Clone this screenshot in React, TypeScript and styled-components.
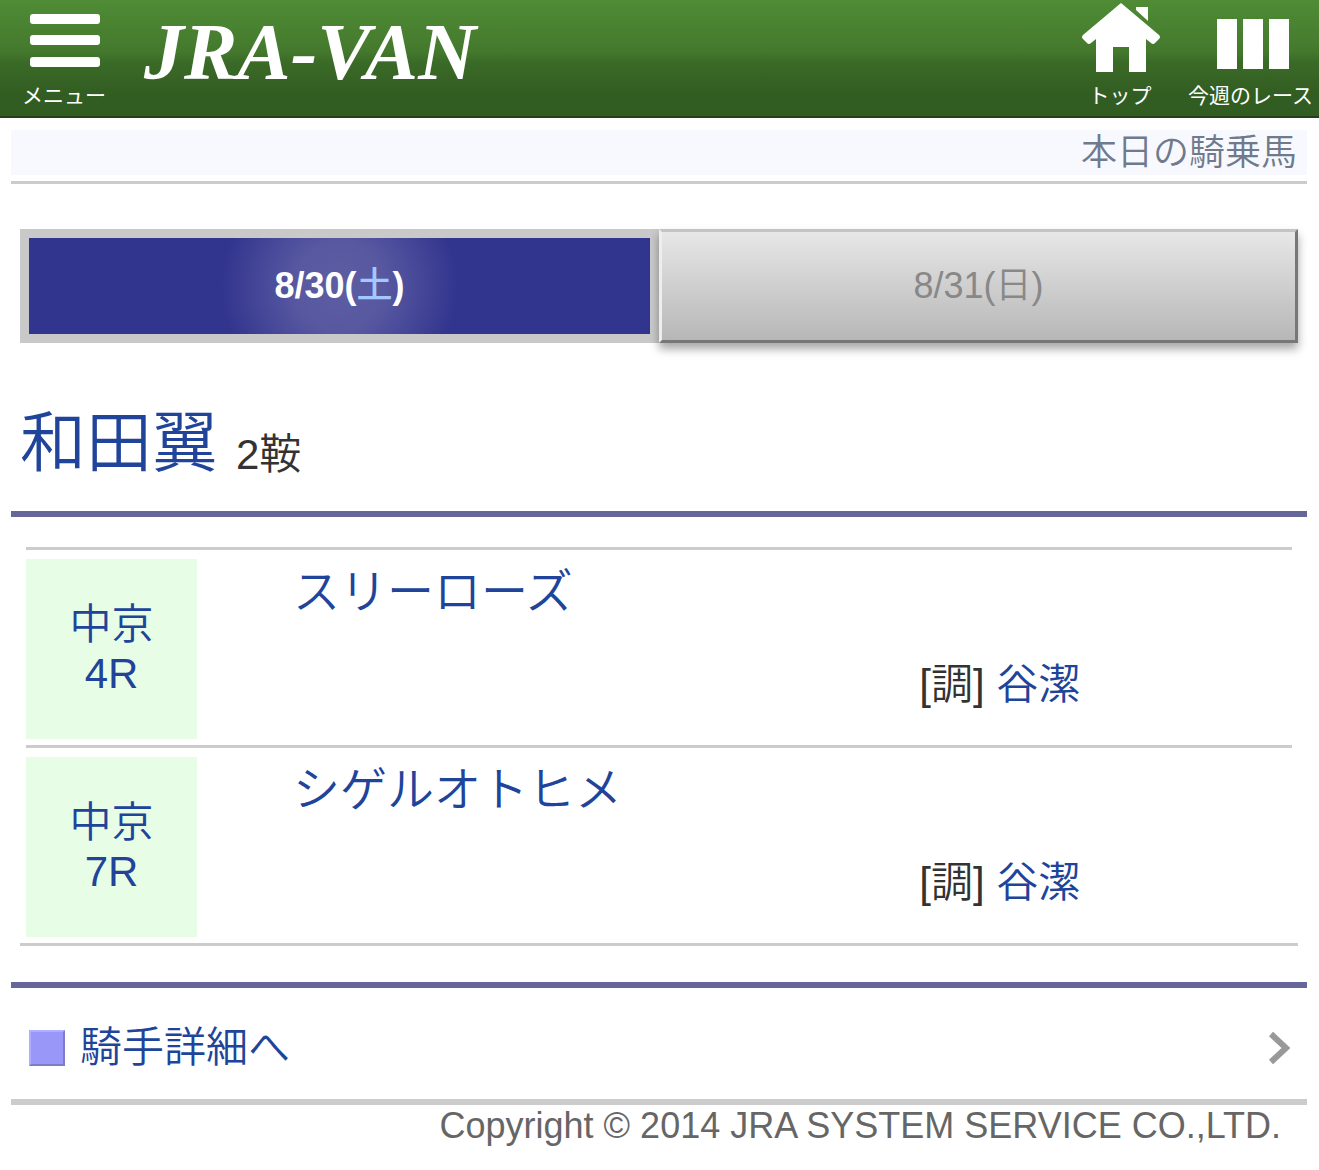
import React from "react";
import styled, { createGlobalStyle } from "styled-components";

const GlobalStyle = createGlobalStyle`
  *, *::before, *::after { box-sizing: border-box; }
  body {
    margin: 0;
    background: #fff;
    color: #333;
    font-family: "Liberation Sans", "Noto Sans CJK JP", sans-serif;
    font-weight: 350;
  }
  a { color: #20449a; text-decoration: none; }
  h1, h2, p, ul { margin: 0; padding: 0; font-weight: inherit; }
  ul { list-style: none; }
`;

const Header = styled.header`
  display: flex;
  align-items: flex-start;
  height: 118px;
  padding: 0 6px 0 22px;
  border-bottom: 2px solid #263f1b;
  background: linear-gradient(#4f8c35 0, #44792d 44%, #3a6a27 54%, #325d22 82%, #325d22 100%);
`;

const iconItem = `
  display: flex;
  flex-direction: column;
  align-items: center;
  padding: 0;
  border: 0;
  background: none;
  color: #fff;
  font: inherit;
  font-size: 21px;
  font-weight: 400;
  line-height: 32px;
  white-space: nowrap;
  cursor: pointer;
`;
const MenuButton = styled.button`${iconItem}`;
const HeaderLink = styled.a`
  ${iconItem}
  && { color: #fff; }
`;
const HeaderIcon = styled.svg`
  display: block;
  width: 80px;
  height: 80px;
  fill: #fff;
`;

const Logo = styled.a`
  margin-left: 38px;
  padding-top: 8px;
  font: italic bold 80px/88px "Liberation Serif", serif;
  && { color: #fff; }
`;

const HeaderNav = styled.nav`
  display: flex;
  gap: 28px;
  margin-left: auto;
`;

const Page = styled.main`
  padding: 12px 12px 0 11px;
`;

const TitleBar = styled.div`
  padding-bottom: 6px;
  border-bottom: 3px solid #ccc;
`;
const PageTitle = styled.h1`
  padding-right: 10px;
  background: #f7f9ff;
  color: #6f7a8c;
  font-size: 36px;
  line-height: 45px;
  text-align: right;
`;

const Rule = styled.hr<{ $color: string }>`
  height: 6px;
  margin: 0;
  border: 0;
  background: ${(p) => p.$color};
`;

const Tabs = styled.div`
  display: grid;
  grid-template-columns: 1fr 1fr;
  margin: 45px 9px 0;
`;

const Tab = styled.button<{ $active?: boolean }>`
  height: 114px;
  padding: 0;
  font: inherit;
  font-size: 36px;
  line-height: 48px;
  cursor: pointer;
  ${(p) =>
    p.$active
      ? `
    border: 9px solid #c9c9c9;
    background: radial-gradient(circle at 50% 50%, #5d5da3 0, #5858a1 45px, #32358e 118px);
    color: #fff;
    font-weight: bold;
  `
      : `
    border: 3px solid;
    border-color: #c4c4c4 #777 #777 #eee;
    background: linear-gradient(#e7e7e7, #b7b7b7);
    box-shadow: 0 6px 9px rgba(0, 0, 0, 0.35);
    color: #888;
  `}
`;
const Saturday = styled.span`
  color: #a3c8ff;
  font-weight: 500;
`;

const Jockey = styled.h2`
  display: flex;
  align-items: flex-end;
  gap: 18px;
  padding: 56px 9px 24px;
  font-size: 66px;
  line-height: 88px;
`;
const Rides = styled.span`
  font-size: 42px;
  line-height: 64px;
`;

const RaceList = styled.ul`
  margin: 30px 9px 36px;
  border-bottom: 3px solid #ccc;
`;
const RaceRow = styled.li`
  display: flex;
  margin: 0 6px;
  padding: 9px 0 6px;
  border-top: 3px solid #ccc;
`;
const RaceCell = styled.a`
  display: flex;
  flex-direction: column;
  justify-content: center;
  flex: 0 0 171px;
  height: 180px;
  background: #e8fde6;
  font-size: 42px;
  line-height: 49px;
  text-align: center;
`;
const RaceInfo = styled.div`
  display: flex;
  flex: 1;
  flex-direction: column;
  justify-content: space-between;
  padding-bottom: 22px;
`;
const Horse = styled.a`
  padding-left: 96px;
  font-size: 47px;
  line-height: 66px;
`;
const Trainer = styled.p`
  align-self: flex-end;
  width: 53%;
  padding-right: 4px;
  font-size: 42px;
  line-height: 64px;
  text-align: center;
`;

const DetailLink = styled.a`
  display: flex;
  align-items: center;
  gap: 15px;
  height: 111px;
  padding: 9px 15px 0 18px;
  font-size: 42px;
  line-height: 60px;
`;
const Bullet = styled.span`
  width: 36px;
  height: 36px;
  border: 2px solid;
  border-color: #b0afff #7f7dc8 #7f7dc8 #b0afff;
  background: #9998f8;
`;
const Chevron = styled.svg`
  width: 24px;
  height: 36px;
  margin-left: auto;
  fill: none;
  stroke: #999;
  stroke-width: 6;
`;

const Footer = styled.footer`
  padding: 0 38px 24px 12px;
  color: #666;
  font-size: 36px;
  line-height: 41px;
  text-align: right;
`;

const races = [
  { place: "中京", number: "4R", horse: "スリーローズ", trainer: "谷潔" },
  { place: "中京", number: "7R", horse: "シゲルオトヒメ", trainer: "谷潔" },
];

export default function App() {
  return (
    <>
      <GlobalStyle />
      <Header>
        <MenuButton type="button">
          <HeaderIcon viewBox="0 0 80 80" aria-hidden="true">
            <rect x="6" y="14" width="70" height="10" rx="3" />
            <rect x="6" y="35" width="70" height="10" rx="3" />
            <rect x="6" y="57" width="70" height="10" rx="3" />
          </HeaderIcon>
          メニュー
        </MenuButton>
        <Logo href="#">JRA-VAN</Logo>
        <HeaderNav>
          <HeaderLink href="#">
            <HeaderIcon viewBox="0 0 80 80" aria-hidden="true">
              <path d="M41 3 L79 35 Q81 37 79 39 L75 43 Q73 45 71 43 L66 39 V72 H49 V47 H33 V72 H16 V39 L11 43 Q9 45 7 43 L3 39 Q1 37 3 35 Z" />
              <path d="M56 7 H68 V21 L56 10 Z" />
            </HeaderIcon>
            トップ
          </HeaderLink>
          <HeaderLink href="#">
            <HeaderIcon viewBox="0 0 80 80" aria-hidden="true">
              <rect x="6" y="19" width="20" height="50" />
              <rect x="32" y="19" width="20" height="50" />
              <rect x="58" y="19" width="20" height="50" />
            </HeaderIcon>
            今週のレース
          </HeaderLink>
        </HeaderNav>
      </Header>

      <Page>
        <TitleBar>
          <PageTitle>本日の騎乗馬</PageTitle>
        </TitleBar>

        <Tabs>
          <Tab type="button" $active>
            8/30(<Saturday>土</Saturday>)
          </Tab>
          <Tab type="button">8/31(日)</Tab>
        </Tabs>

        <Jockey>
          <a href="#">和田翼</a>
          <Rides>2鞍</Rides>
        </Jockey>
        <Rule $color="#666699" />

        <RaceList>
          {races.map((race) => (
            <RaceRow key={race.number}>
              <RaceCell href="#">
                <span>{race.place}</span>
                <span>{race.number}</span>
              </RaceCell>
              <RaceInfo>
                <Horse href="#">{race.horse}</Horse>
                <Trainer>
                  [調] <a href="#">{race.trainer}</a>
                </Trainer>
              </RaceInfo>
            </RaceRow>
          ))}
        </RaceList>
        <Rule $color="#666699" />

        <DetailLink href="#">
          <Bullet />
          騎手詳細へ
          <Chevron viewBox="0 0 24 36" aria-hidden="true">
            <path d="M3 4 L18 18 L3 32" />
          </Chevron>
        </DetailLink>
        <Rule $color="#ccc" />
      </Page>
      <Footer>Copyright © 2014 JRA SYSTEM SERVICE CO.,LTD.</Footer>
    </>
  );
}
